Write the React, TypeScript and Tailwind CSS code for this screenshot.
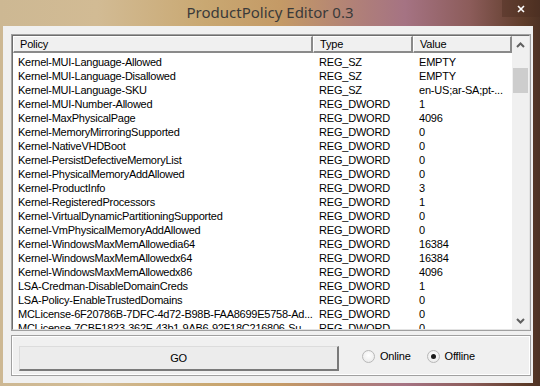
const rows: [string, string, string][] = [
  ["Kernel-MUI-Language-Allowed", "REG_SZ", "EMPTY"],
  ["Kernel-MUI-Language-Disallowed", "REG_SZ", "EMPTY"],
  ["Kernel-MUI-Language-SKU", "REG_SZ", "en-US;ar-SA;pt-..."],
  ["Kernel-MUI-Number-Allowed", "REG_DWORD", "1"],
  ["Kernel-MaxPhysicalPage", "REG_DWORD", "4096"],
  ["Kernel-MemoryMirroringSupported", "REG_DWORD", "0"],
  ["Kernel-NativeVHDBoot", "REG_DWORD", "0"],
  ["Kernel-PersistDefectiveMemoryList", "REG_DWORD", "0"],
  ["Kernel-PhysicalMemoryAddAllowed", "REG_DWORD", "0"],
  ["Kernel-ProductInfo", "REG_DWORD", "3"],
  ["Kernel-RegisteredProcessors", "REG_DWORD", "1"],
  ["Kernel-VirtualDynamicPartitioningSupported", "REG_DWORD", "0"],
  ["Kernel-VmPhysicalMemoryAddAllowed", "REG_DWORD", "0"],
  ["Kernel-WindowsMaxMemAllowedia64", "REG_DWORD", "16384"],
  ["Kernel-WindowsMaxMemAllowedx64", "REG_DWORD", "16384"],
  ["Kernel-WindowsMaxMemAllowedx86", "REG_DWORD", "4096"],
  ["LSA-Credman-DisableDomainCreds", "REG_DWORD", "1"],
  ["LSA-Policy-EnableTrustedDomains", "REG_DWORD", "0"],
  ["MCLicense-6F20786B-7DFC-4d72-B98B-FAA8699E5758-Ad...", "REG_DWORD", "0"],
  ["MCLicense-7CBF1823-362F-43b1-9AB6-92F18C216806-Su...", "REG_DWORD", "0"],
];

function HeaderCell({ label, className }: { label: string; className: string }) {
  return (
    <div className={`${className} h-full flex items-center pl-[6px] border-t border-l border-white border-r-2 border-b-2 border-r-[#8a8a8a] border-b-[#8a8a8a] bg-[#f0f0f0]`}>
      {label}
    </div>
  );
}

function Radio({ label, checked }: { label: string; checked?: boolean }) {
  return (
    <div className="flex items-center gap-[5px]">
      <div className="w-[13px] h-[13px] rounded-full border border-[#b8b8b8] bg-[radial-gradient(circle_at_50%_40%,#ffffff,#e6e6e6)] flex items-center justify-center">
        {checked && <div className="w-[5px] h-[5px] rounded-full bg-[#1a1a1a]" />}
      </div>
      <span>{label}</span>
    </div>
  );
}

export default function App() {
  return (
    <div className="w-[540px] h-[386px] overflow-hidden flex flex-col bg-[linear-gradient(90deg,#cdb893_0%,#d2bb94_18%,#c9a872_38%,#c49a66_52%,#b08078_66%,#a57383_75%,#8c5c5a_87%,#5e3c2a_97%,#4e3224_100%)] font-['Liberation_Sans',Arial,sans-serif] text-[11px] tracking-[-0.2px] text-black">
      {/* title bar */}
      <div className="relative h-[26px] flex items-center justify-center">
        <span className="font-['Noto_Sans',sans-serif] text-[15px] tracking-normal text-[#3a3a3a] pb-[2px]">ProductPolicy Editor 0.3</span>
        <div className="absolute right-0 top-0 w-[38px] h-[17px] bg-[#4a2c20]/40 flex items-center justify-center">
          <svg width="8" height="8" viewBox="0 0 8 8">
            <path d="M1 1L7 7M7 1L1 7" stroke="#fff" strokeWidth="1.6" />
          </svg>
        </div>
      </div>

      {/* client area */}
      <div className="ml-[3px] w-[530px] h-[357px] bg-[#f0f0f0] pl-[8px] pr-[2px] pt-[8px] pb-[7px] flex flex-col gap-[4px]">
        {/* list view */}
        <div className="h-[297px] border border-[#a0a0a0]">
          <div className="h-full border-t border-l border-[#6e6e6e] border-b border-r border-b-[#e3e3e3] border-r-[#e3e3e3] bg-white flex">
            <div className="w-[499px] flex flex-col overflow-hidden">
              <div className="h-[17px] flex shrink-0">
                <HeaderCell label="Policy" className="w-[300px]" />
                <HeaderCell label="Type" className="w-[100px]" />
                <HeaderCell label="Value" className="flex-1" />
              </div>
              <div className="pt-[2px] overflow-hidden">
                {rows.map(([p, t, v]) => (
                  <div key={p} className="h-[14px] flex items-center whitespace-nowrap leading-[14px]">
                    <div className="w-[300px] shrink-0 pl-[5px] tracking-[-0.25px]">{p}</div>
                    <div className="w-[100px] shrink-0 pl-[6px]">{t}</div>
                    <div className="flex-1 pl-[6px] overflow-hidden">{v}</div>
                  </div>
                ))}
              </div>
            </div>
            {/* scrollbar */}
            <div className="w-[17px] bg-[#f0f0f0] flex flex-col">
              <div className="h-[17px] flex items-center justify-center">
                <svg width="9" height="6" viewBox="0 0 9 6">
                  <path d="M1 5L4.5 1.5L8 5" fill="none" stroke="#606060" strokeWidth="2" />
                </svg>
              </div>
              <div className="flex-1 pt-[15px]">
                <div className="ml-[1px] w-[15px] h-[25px] bg-[#cdcdcd]" />
              </div>
              <div className="h-[17px] flex items-center justify-center">
                <svg width="9" height="6" viewBox="0 0 9 6">
                  <path d="M1 1L4.5 4.5L8 1" fill="none" stroke="#606060" strokeWidth="2" />
                </svg>
              </div>
            </div>
          </div>
        </div>

        {/* bottom panel */}
        <div className="h-[41px] border border-[#a0a0a0]">
          <div className="h-full border-t border-l border-white border-b border-r border-b-white border-r-white flex items-start pl-[6px] pt-[9px]">
            <div className="w-[320px] h-[25px] border-t border-l border-[#dcdcdc] border-b-2 border-r-2 border-b-[#7a7a7a] border-r-[#7a7a7a] bg-[#ececec] flex items-center justify-center">
              GO
            </div>
            <div className="ml-[23px] mt-[2px] flex items-center gap-[16px]">
              <Radio label="Online" />
              <Radio label="Offline" checked />
            </div>
          </div>
        </div>
      </div>
    </div>
  );
}
